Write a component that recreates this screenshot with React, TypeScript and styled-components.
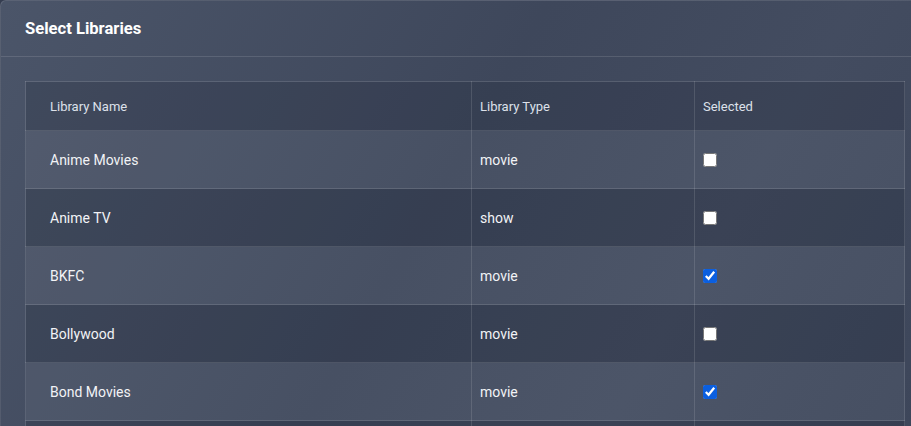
import { FC } from "react";
import styled, { createGlobalStyle } from "styled-components";

const GlobalStyle = createGlobalStyle`
  html, body {
    margin: 0;
    overflow: hidden;
    background: #353d50;
    font-family: Roboto, "Liberation Sans", Arial, sans-serif;
  }
`;

const Panel = styled.div`
  width: 929px;
  border: 1px solid rgba(255, 255, 255, 0.12);
  border-radius: 6px;
  background: linear-gradient(120deg, #4b5569 0%, #3e475b 45%, #434c60 70%, #3c4559 100%);
  color: #fff;
`;

const PanelHeader = styled.div`
  display: flex;
  align-items: center;
  height: 55px;
  padding: 0 24px;
  border-bottom: 1px solid rgba(255, 255, 255, 0.12);
`;

const Title = styled.h2`
  margin: 0;
  font-size: 16.6px;
  font-weight: 700;
  color: #fff;
`;

const PanelBody = styled.div`
  padding: 24px;
`;

const Table = styled.table`
  width: 879px;
  border-collapse: collapse;
  border: 1px solid rgba(255, 255, 255, 0.12);
  table-layout: fixed;
`;

const HeadRow = styled.tr`
  background: rgba(20, 28, 44, 0.18);
`;

const Row = styled.tr<{ $odd: boolean }>`
  background: ${(p) => (p.$odd ? "rgba(255, 255, 255, 0.05)" : "rgba(10, 16, 32, 0.16)")};
`;

const Th = styled.th<{ $w: number; $first?: boolean }>`
  box-sizing: border-box;
  width: ${(p) => p.$w}px;
  height: 49px;
  padding: 0 8px 0 ${(p) => (p.$first ? 24 : 8)}px;
  text-align: left;
  font-size: 13px;
  font-weight: 400;
  color: #dde1ea;
  border: 1px solid rgba(255, 255, 255, 0.12);
`;

const Td = styled.td<{ $first?: boolean }>`
  height: 57px;
  padding: 0 8px 0 ${(p) => (p.$first ? 24 : 8)}px;
  font-size: 14px;
  color: #f2f3f6;
  border: 1px solid rgba(255, 255, 255, 0.12);
`;

const Check = styled.input`
  display: block;
  margin: 0;
  width: 14px;
  height: 14px;
  accent-color: #0b5fe0;
`;

const libraries = [
  { name: "Anime Movies", type: "movie", selected: false },
  { name: "Anime TV", type: "show", selected: false },
  { name: "BKFC", type: "movie", selected: true },
  { name: "Bollywood", type: "movie", selected: false },
  { name: "Bond Movies", type: "movie", selected: true },
  { name: "Cartoons", type: "show", selected: false },
];

const App: FC = () => {
  return (
    <>
      <GlobalStyle />
      <Panel>
        <PanelHeader>
          <Title>Select Libraries</Title>
        </PanelHeader>
        <PanelBody>
          <Table>
            <thead>
              <HeadRow>
                <Th $w={446} $first>
                  Library Name
                </Th>
                <Th $w={223}>Library Type</Th>
                <Th $w={210}>Selected</Th>
              </HeadRow>
            </thead>
            <tbody>
              {libraries.map((lib, i) => (
                <Row key={lib.name} $odd={i % 2 === 0}>
                  <Td $first>{lib.name}</Td>
                  <Td>{lib.type}</Td>
                  <Td>
                    <Check type="checkbox" defaultChecked={lib.selected} />
                  </Td>
                </Row>
              ))}
            </tbody>
          </Table>
        </PanelBody>
      </Panel>
    </>
  );
};

export default App;
